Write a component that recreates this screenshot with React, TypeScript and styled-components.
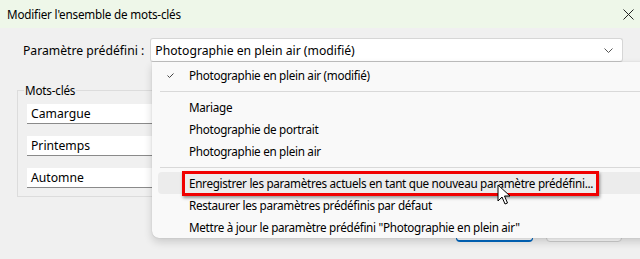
import React from "react";
import styled, { createGlobalStyle } from "styled-components";

const Global = createGlobalStyle`
  html, body { margin: 0; padding: 0; }
  body {
    background: #f0f0f0;
    font-family: "Noto Sans", "Open Sans", sans-serif;
    color: #000;
  }
`;

const Window = styled.div`
  position: relative;
  width: 640px;
  height: 259px;
  overflow: hidden;
  background: #f0f0f0;
`;

const TitleBar = styled.div`
  height: 28px;
  background: #eef7e9;
  display: flex;
  align-items: center;
  justify-content: space-between;
  padding: 0 6px 0 7px;
  font-size: 11.7px;
  letter-spacing: -0.2px;
  box-sizing: border-box;
`;

const CloseIcon = styled.svg`
  width: 11px;
  height: 11px;
`;

const PresetRow = styled.div`
  display: flex;
  align-items: center;
  padding: 10px 17px 0 23px;
  gap: 6px;
  font-size: 12.2px;
`;

const Combo = styled.div`
  flex: 1;
  height: 24px;
  box-sizing: border-box;
  background: #fff;
  border: 1px solid #d6d6d6;
  border-bottom-color: #c4c4c4;
  border-radius: 3px;
  display: flex;
  align-items: center;
  justify-content: space-between;
  padding: 0 9px 0 4px;
`;

const Chevron = styled.svg`
  width: 9px;
  height: 5px;
`;

const GroupBox = styled.fieldset`
  margin: 20px 0 0 17px;
  width: 200px;
  height: 115px;
  box-sizing: border-box;
  border: 1px solid #dcdcdc;
  padding: 6px 0 0 9px;
  display: flex;
  flex-direction: column;
  gap: 12px;
`;

const Legend = styled.legend`
  font-size: 11.7px;
  letter-spacing: -0.2px;
  padding: 0 1px;
  margin-left: -3px;
`;

const KeywordInput = styled.div`
  height: 20px;
  width: 160px;
  box-sizing: border-box;
  background: #fff;
  border-bottom: 1px solid #8a8a8a;
  font-size: 12.2px;
  padding-left: 4px;
  display: flex;
  align-items: center;
`;

const ButtonRow = styled.div`
  display: flex;
  gap: 13px;
  padding: 0 18px 0 456px;
  margin-top: 21px;
`;

const Button = styled.div<{ $primary?: boolean }>`
  width: 77px;
  height: 24px;
  box-sizing: border-box;
  border-radius: 4px;
  background: #fdfdfd;
  border: 1px solid ${(p) => (p.$primary ? "#0067c0" : "#cfcfcf")};
  border-bottom-width: ${(p) => (p.$primary ? "2px" : "1px")};
`;

const Menu = styled.div`
  position: absolute;
  left: 152px;
  top: 62px;
  width: 520px;
  height: 176px;
  background: #f9f9f9;
  border-radius: 0 0 0 7px;
  box-shadow: 0 4px 8px rgba(0, 0, 0, 0.16), 0 0 1px rgba(0, 0, 0, 0.25);
  padding: 2px 0 0 6px;
  box-sizing: border-box;
  font-size: 11.7px;
  letter-spacing: -0.3px;
`;

const Item = styled.div<{ $hover?: boolean }>`
  position: relative;
  height: 22px;
  display: flex;
  align-items: center;
  padding-left: 31px;
  margin-right: 14px;
  border-radius: 4px;
  background: ${(p) => (p.$hover ? "#ececec" : "transparent")};
`;

const Check = styled.svg`
  position: absolute;
  left: 9px;
  top: 9px;
  width: 7px;
  height: 5px;
`;

const Separator = styled.div`
  height: 1px;
  background: #d9d9d9;
  margin: 5px 0 4px 2px;
`;

const Highlight = styled.span`
  position: relative;
  &::after {
    content: "";
    position: absolute;
    left: -7px;
    right: -6px;
    top: -4px;
    bottom: -5px;
    border: 3px solid #f00000;
    box-shadow: 1px 2px 3px rgba(0, 0, 0, 0.4);
  }
`;

const Cursor = styled.svg`
  position: absolute;
  left: 497px;
  top: 184px;
  width: 14px;
  height: 22px;
`;

export default function App() {
  return (
    <>
      <Global />
      <Window>
        <TitleBar>
          <span>Modifier l'ensemble de mots-clés</span>
          <CloseIcon viewBox="0 0 11 11">
            <path d="M0.5 0.5 L10.5 10.5 M10.5 0.5 L0.5 10.5" stroke="#222" strokeWidth="1" fill="none" />
          </CloseIcon>
        </TitleBar>
        <PresetRow>
          <span>Paramètre prédéfini :</span>
          <Combo>
            <span>Photographie en plein air (modifié)</span>
            <Chevron viewBox="0 0 9 5">
              <path d="M0.5 0.5 L4.5 4.5 L8.5 0.5" stroke="#555" strokeWidth="1" fill="none" />
            </Chevron>
          </Combo>
        </PresetRow>
        <GroupBox>
          <Legend>Mots-clés</Legend>
          <KeywordInput>Camargue</KeywordInput>
          <KeywordInput>Printemps</KeywordInput>
          <KeywordInput>Automne</KeywordInput>
        </GroupBox>
        <ButtonRow>
          <Button $primary />
          <Button />
        </ButtonRow>
        <Menu>
          <Item>
            <Check viewBox="0 0 7 5">
              <path d="M0.5 2.5 L2.5 4.5 L6.5 0.5" stroke="#444" strokeWidth="1" fill="none" />
            </Check>
            Photographie en plein air (modifié)
          </Item>
          <Separator />
          <Item>Mariage</Item>
          <Item>Photographie de portrait</Item>
          <Item>Photographie en plein air</Item>
          <Separator />
          <Item $hover>
            <Highlight>Enregistrer les paramètres actuels en tant que nouveau paramètre prédéfini...</Highlight>
          </Item>
          <Item>Restaurer les paramètres prédéfinis par défaut</Item>
          <Item>Mettre à jour le paramètre prédéfini "Photographie en plein air"</Item>
        </Menu>
        <Cursor viewBox="0 0 14 22">
          <path d="M1 1 L1 17 L5 13 L8 20 L10.5 19 L7.5 12 L13 12 Z" fill="#fff" stroke="#000" strokeWidth="1" strokeLinejoin="round" />
        </Cursor>
      </Window>
    </>
  );
}
